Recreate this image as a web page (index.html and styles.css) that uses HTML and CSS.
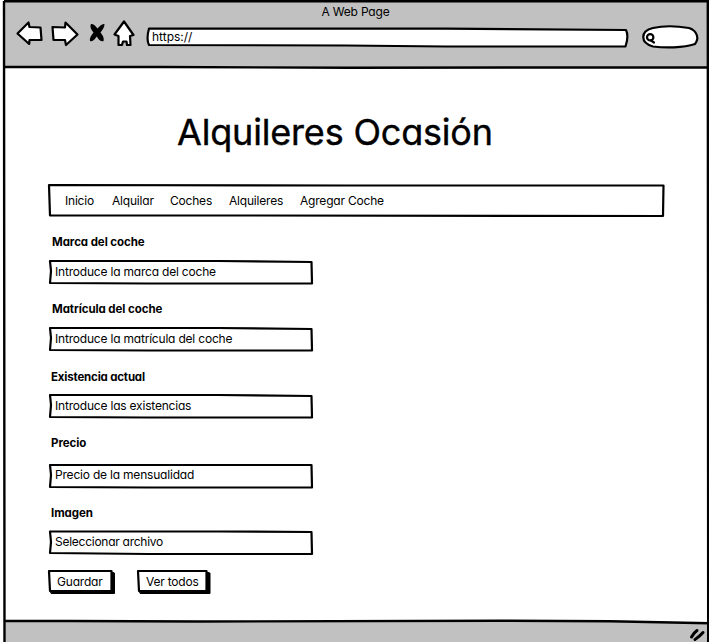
FILE: index.html
```html
<!DOCTYPE html>
<html lang="es">
<head>
<meta charset="utf-8">
<title>Alquileres Ocasión</title>
<link rel="stylesheet" href="styles.css">
</head>
<body>
<div class="browser">
  <header class="chrome">
    <div class="chrome-title">A Web Page</div>
    <div class="toolbar">
      <svg class="tools" viewBox="0 0 130 32" width="130" height="32">
        <g class="ink">
          <path d="M5.500 15.500L16.500 4.500L17.500 9L28.500 9.500L29.500 22L17.500 22L17.200 26L6 16Z"/>
          <path d="M40.500 9L53 9.500L53.500 4.500L65.500 16.500L54 27L53 22L41.500 22Z"/>
          <path d="M112 3.500L121.500 17L118 18L118.500 27L115 27L114.500 23.500L111 23.500L110 27L106.500 27L106.500 18L102.500 16.500Z"/>
        </g>
        <path class="cross" d="M79 6C82 5.500 83.500 8 85.500 10.500C87.500 8 90 5.500 92.500 6C92.500 9.500 90.500 11.500 88.500 14.500C90.500 17 92.500 20 91.500 23C88 24 86.500 21 84.800 18.500C82.500 21.500 81 24 78 23C77.500 19.500 79.500 17.500 81.500 14.500C79.500 12 77.500 9 79 6Z"/>
      </svg>
      <div class="address">
        <svg class="sketch" viewBox="0 0 482 21" preserveAspectRatio="none"><path d="M3 1.500L300 1.700L480 3C482.500 8 481 15 479.500 19.500L300 19.500L200 18.500L3 18C.5 13 1.500 7 3 1.500Z"/></svg>
        <span class="url">https://</span>
      </div>
      <div class="search">
        <svg class="sketch" viewBox="0 0 58 24" preserveAspectRatio="none"><path d="M12 3C23 .5 36 1 48 3C57 6 58 14 54 19C42 23 24 23 12 21.500C-1 18 -1 6 12 3Z"/><circle cx="9.200" cy="12.300" r="3.200"/><path d="M10 15.500L13 17.500"/></svg>
      </div>
    </div>
  </header>
  <main class="page">
    <h1 class="title">Alquileres Ocasión</h1>
    <nav class="nav">
      <svg class="sketch" viewBox="0 0 617 34" preserveAspectRatio="none"><path d="M1 2L300 2.500L615.500 2.500L615 33L200 32.500L2 32.500Z"/></svg>
      <a class="n1">Inicio</a><a class="n2">Alquilar</a><a class="n3">Coches</a><a class="n4">Alquileres</a><a class="n5">Agregar Coche</a>
    </nav>
    <form class="form">
      <div class="field f1"><label>Marca del coche</label><div class="input"><svg class="sketch" viewBox="0 0 265 26" preserveAspectRatio="none"><path d="M2 2L170 2L263.500 3L264 24.500L100 24.500L2 24L3 12Z"/></svg><span>Introduce la marca del coche</span></div></div>
      <div class="field f2"><label>Matrícula del coche</label><div class="input"><svg class="sketch" viewBox="0 0 265 26" preserveAspectRatio="none"><path d="M2 2L170 2L263.500 3L264 24.500L100 24.500L2 24L3 12Z"/></svg><span>Introduce la matrícula del coche</span></div></div>
      <div class="field f3"><label>Existencia actual</label><div class="input"><svg class="sketch" viewBox="0 0 265 26" preserveAspectRatio="none"><path d="M2 2L170 2L263.500 3L264 24.500L100 24.500L2 24L3 12Z"/></svg><span>Introduce las existencias</span></div></div>
      <div class="field f4"><label>Precio</label><div class="input"><svg class="sketch" viewBox="0 0 265 26" preserveAspectRatio="none"><path d="M2 2L170 2L263.500 2L264 24.500L100 24.500L2 24L3 12Z"/></svg><span>Precio de la mensualidad</span></div></div>
      <div class="field f5"><label>Imagen</label><div class="input"><svg class="sketch" viewBox="0 0 265 26" preserveAspectRatio="none"><path d="M2 1.500L170 1.500L263.500 2L264 24L100 24L2 23L3 12Z"/></svg><span>Seleccionar archivo</span></div></div>
      <div class="actions">
        <button type="button" class="button b1"><svg class="sketch" viewBox="0 0 68 25" preserveAspectRatio="none"><path class="shade" d="M2.500 22L63 21L63 3L66.500 4L66.500 24.500L3.500 24.500Z"/><path d="M1 2L63.500 2L63.500 22L2 22Z"/></svg><span>Guardar</span></button>
        <button type="button" class="button b2"><svg class="sketch" viewBox="0 0 74 25" preserveAspectRatio="none"><path class="shade" d="M2.500 22L69 21L69 3L73 4L73 24.500L3.500 24.500Z"/><path d="M1 2L69.500 2L69.500 22L2 22Z"/></svg><span>Ver todos</span></button>
      </div>
    </form>
  </main>
  <footer class="status">
    <svg class="grip" viewBox="0 0 18 14" width="18" height="14"><path d="M2.500 9C4 6 6 4 8 2.500M6 11.500C8 10 11 8 14 4.500"/></svg>
  </footer>
  <svg class="frame" viewBox="0 0 709 642"><path class="footline" d="M4 621L200 621.500L500 620.700L610 621.200L709 623.300L709 620L4 619.500Z"/><path d="M4 1.200L708 1.200M4 1L4.500 642M707.800 0L708.200 642M4 66.800L160 67L350 67.700L709 67.300M4 620.700L200 621.500L500 620.700L610 621.200L709 623.300"/></svg>
</div>
</body>
</html>
```
FILE: styles.css
```css
* { box-sizing: border-box; }
body { margin: 0; background: #fff; color: #000; font-family: Inter, "Open Sans", sans-serif; font-feature-settings: "cv11"; font-size: 12px; line-height: 16px; letter-spacing: -.2px; }
.browser { position: relative; width: 709px; height: 642px; overflow: hidden; display: flex; flex-direction: column; padding-left: 4px; }
.chrome { height: 68px; background: #c1c1c1; }
.chrome-title { height: 18px; padding: 4px 2px 0 0; text-align: center; }
.toolbar { display: flex; align-items: flex-start; padding-left: 8px; }
.tools { display: block; }
.ink path, .sketch path, .sketch circle { fill: #fff; stroke: #000; stroke-width: 2.2; stroke-linejoin: round; stroke-linecap: round; }
.cross { fill: #000; }
.sketch { position: absolute; inset: 0; width: 100%; height: 100%; overflow: visible; z-index: -1; }
.address, .search, .nav, .input, .button { position: relative; z-index: 0; }
.address { width: 482px; height: 21px; margin: 9px 0 0 4px; padding: 2px 0 0 6px; letter-spacing: 0; }
.search { width: 58px; height: 24px; margin: 7px 0 0 13px; }
.page { flex: 1; padding: 0 0 0 44px; }
.title { margin: 42px 0 0 129px; font-size: 36px; line-height: 44px; font-weight: 400; -webkit-text-stroke: .4px #000; letter-spacing: -.18px; white-space: nowrap; }
.nav { display: flex; width: 617px; height: 34px; margin-top: 29px; padding: 10px 0 0 17px; }
.nav a { white-space: nowrap; }
.n1 { width: 47px; } .n2 { width: 58px; } .n3 { width: 59px; } .n4 { width: 71px; }
.form { padding-top: 16px; }
.field { height: 67px; }
.field label { display: block; height: 26px; padding: 1px 0 0 4px; font-weight: 700; font-size: 11.500px; letter-spacing: -.07px; }
.f3 label, .f4 label, .f5 label { padding-left: 3px; }
.f3 { padding-top: 1px; } .f3 label { height: 25px; letter-spacing: -.18px; }
.f4 { height: 70px; } .f4 label { height: 29px; }
.f5 { height: 55px; }
.input { width: 265px; height: 26px; padding: 5px 0 0 7px; white-space: nowrap; }
.f4 .input, .f5 .input { padding-top: 4px; }
.f5 .input { letter-spacing: -.26px; }
.actions { display: flex; gap: 21px; padding-top: 10px; }
.button { appearance: none; border: 0; background: none; height: 25px; font: inherit; font-feature-settings: inherit; letter-spacing: inherit; color: inherit; padding: 1px 0 0 9px; text-align: left; white-space: nowrap; }
.b1 { width: 68px; } .b2 { width: 74px; }
.sketch .shade { fill: #000; stroke-width: 1; }
.status { height: 21px; background: #c1c1c1; display: flex; justify-content: flex-end; padding: 7px 2px 0 0; }
.grip path { fill: none; stroke: #000; stroke-width: 3; stroke-linecap: round; }
.frame { position: absolute; inset: 0; width: 709px; height: 642px; pointer-events: none; }
.frame path { fill: none; stroke: #000; stroke-width: 2.400; }
.frame .footline { fill: #fff; stroke: none; }
```
